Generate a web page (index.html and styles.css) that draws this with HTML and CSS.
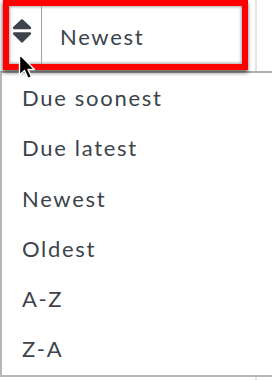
FILE: index.html
```html
<!DOCTYPE html>
<html>
<head>
<meta charset="utf-8">
<link rel="stylesheet" href="styles.css">
</head>
<body>
<div class="page">
  <div class="header">
    <div class="highlight">
      <div class="icon-cell">
        <svg class="sort-icon" width="32" height="58" viewBox="0 0 32 58">
          <polygon points="5,22 21,22 13,14.5" fill="#3d444c" stroke="#3d444c" stroke-width="2.4" stroke-linejoin="round"/>
          <polygon points="5,27.5 21,27.5 13,35.5" fill="#3d444c" stroke="#3d444c" stroke-width="2.4" stroke-linejoin="round"/>
        </svg>
      </div>
      <div class="value">Newest</div>
    </div>
    <div class="edge-line"></div>
  </div>
  <ul class="menu">
    <li>Due soonest</li>
    <li>Due latest</li>
    <li>Newest</li>
    <li>Oldest</li>
    <li>A-Z</li>
    <li>Z-A</li>
  </ul>
  <div class="tick"></div>
  <svg class="cursor" width="20" height="30" viewBox="0 0 20 30">
    <path d="M1.5,1.5 L1.5,22 L6.5,17.5 L10,25.5 L13.5,24 L10,16.5 L16.5,16.5 Z" fill="#000" stroke="#fff" stroke-width="1.4" stroke-linejoin="round"/>
  </svg>
</div>
</body>
</html>
```
FILE: styles.css
```css
* { box-sizing: border-box; }
html, body { margin: 0; padding: 0; background: #fff; }
body {
  width: 272px;
  height: 380px;
  overflow: hidden;
  font-family: Lato, "Noto Sans", sans-serif;
  color: #3c434b;
}
.page { position: relative; width: 272px; height: 380px; }
.header {
  display: flex;
  height: 71px;
}
.highlight {
  margin-left: 3px;
  width: 245px;
  height: 70px;
  border: 6px solid #ff0000;
  display: flex;
  background: #fff;
  box-shadow: 0 3px 4px rgba(0,0,0,0.45), -1px 1px 3px rgba(0,0,0,0.3), inset 0 0 3px 1px rgba(0,0,0,0.35);
  position: relative;
  z-index: 1;
}
.icon-cell {
  width: 33px;
  border-right: 1px solid #a0a09c;
  flex: none;
}
.sort-icon { display: block; }
.value {
  padding-left: 18px;
  padding-top: 3px;
  font-size: 22px;
  letter-spacing: 1.7px;
  line-height: 56px;
}
.edge-line {
  margin-left: 7px;
  width: 2px;
  height: 71px;
  background: #e4e4e2;
}
.menu {
  list-style: none;
  margin: 0;
  padding: 0;
  width: 272px;
  border-top: 2px solid #b0b0ab;
  border-left: 2px solid #b8b8b3;
  border-bottom: 2px solid #b8b8b3;
}
.menu li {
  height: 50.3px;
  line-height: 50.3px;
  padding-left: 20px;
  font-size: 22px;
  letter-spacing: 1.7px;
  white-space: nowrap;
}
.tick {
  margin-left: 255px;
  width: 2px;
  height: 3px;
  background: #e4e4e2;
}
.cursor {
  position: absolute;
  left: 18px;
  top: 53px;
  z-index: 2;
}
```
